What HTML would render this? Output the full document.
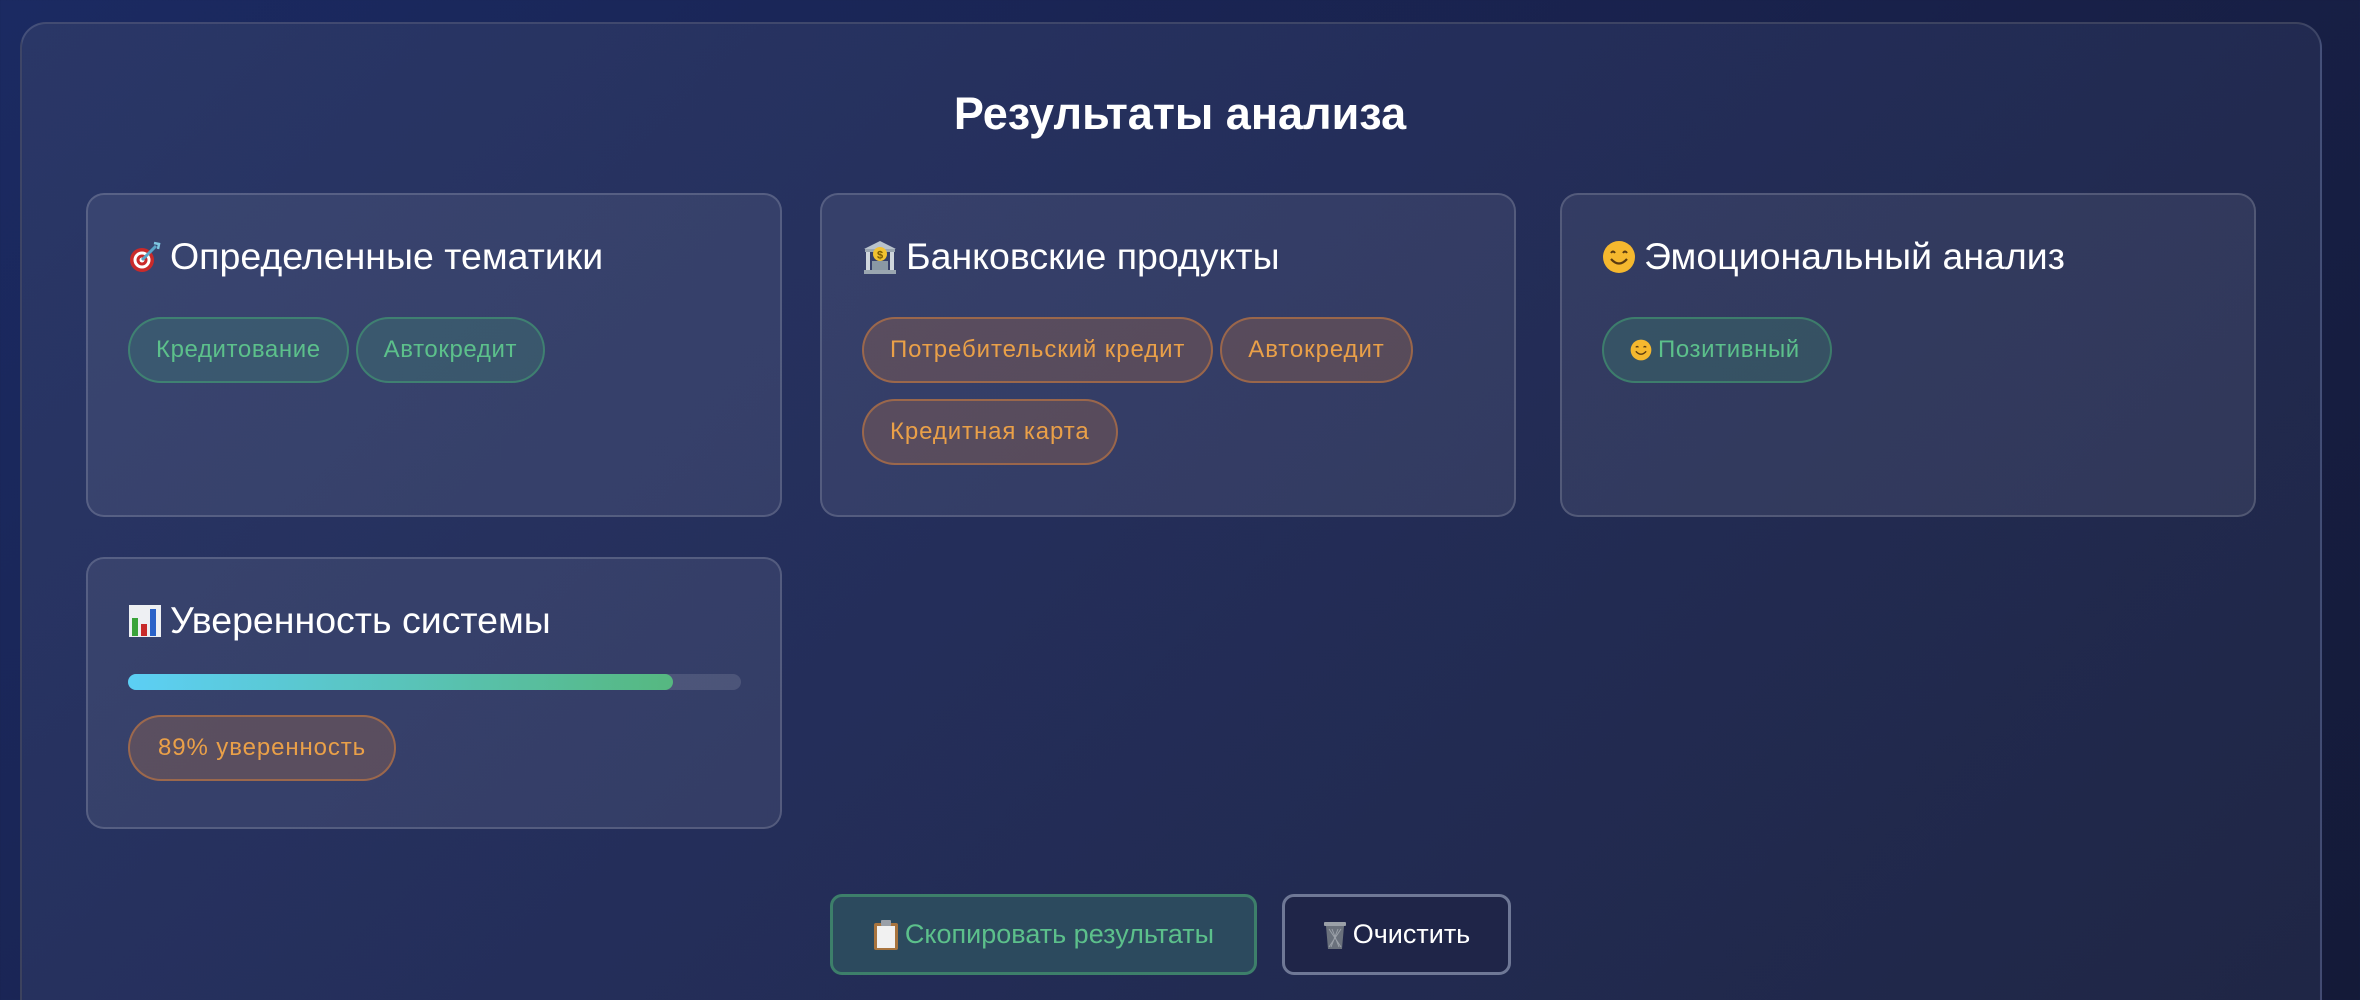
<!DOCTYPE html>
<html><head><meta charset="utf-8"><style>
*{box-sizing:border-box;margin:0;padding:0}
html,body{width:2360px;height:1000px;overflow:hidden}
body{background:linear-gradient(135deg,#1b2a62 0%,#19224d 50%,#141a38 100%);font-family:"Liberation Sans","DejaVu Sans",sans-serif;position:relative}
.wrap{position:absolute;left:20px;top:22px;width:2302px;height:1010px;border-radius:26px;border:2px solid rgba(255,255,255,0.13);background:linear-gradient(135deg,#2a3767 0%,#242e5a 45%,#1f2645 100%)}
h1{position:absolute;left:0;right:0;top:88px;text-align:center;color:#fff;font-size:45px;font-weight:bold}
.card{position:absolute;width:696px;border-radius:18px;border:2px solid rgba(255,255,255,0.16);background:rgba(255,255,255,0.075)}
.card h3{position:absolute;left:40px;top:40px;color:#fff;font-size:37.5px;font-weight:normal;white-space:nowrap;display:flex;align-items:center}
.card h3 svg{margin-right:8px}
.tags{position:absolute;left:40px;top:122px;width:640px}
.tag{display:inline-flex;align-items:center;height:66px;padding:0 26px;border-radius:33px;font-size:24px;margin:0 7px 16px 0;letter-spacing:0.6px;vertical-align:top}
.g{color:#5cc08b;background:rgba(72,187,120,0.18);border:2px solid rgba(72,187,120,0.42)}
.o{color:#eaa048;background:rgba(237,137,54,0.2);border:2px solid rgba(237,137,54,0.45)}
.o.w{letter-spacing:0.9px}
.bar{position:absolute;left:40px;top:115px;width:613px;height:16px;border-radius:8px;background:rgba(255,255,255,0.12)}
.bar div{width:545px;height:16px;border-radius:8px;background:linear-gradient(90deg,#5ccff5,#56b880)}
.btn{position:absolute;top:894px;height:81px;border-radius:12px;display:flex;align-items:center;justify-content:center;font-size:27px}
</style></head><body>
<div class="wrap"></div>
<h1>Результаты анализа</h1>

<div class="card" style="left:86px;top:193px;height:324px">
<h3><svg width="34" height="34" viewBox="0 0 34 34"><circle cx="14" cy="20" r="12" fill="#c92a2a"/><circle cx="14" cy="20" r="8.5" fill="#fff"/><circle cx="14" cy="20" r="5.5" fill="#c92a2a"/><circle cx="14" cy="20" r="2.5" fill="#fff"/><path d="M14 20 L28 6" stroke="#5aa5c8" stroke-width="3"/><path d="M26 3 L31 4 L30 9" stroke="#7ec6e0" stroke-width="2.5" fill="none"/></svg>Определенные тематики</h3>
<div class="tags"><span class="tag g">Кредитование</span><span class="tag g">Автокредит</span></div>
</div>

<div class="card" style="left:820px;top:193px;height:324px">
<h3><svg width="36" height="36" viewBox="0 0 36 36"><path d="M2 10 L18 2 L34 10 Z" fill="#b9c3cc"/><rect x="3" y="10" width="30" height="3" fill="#9aa6b0"/><rect x="4" y="13" width="4" height="18" fill="#cfd6dc"/><rect x="28" y="13" width="4" height="18" fill="#cfd6dc"/><rect x="10" y="22" width="16" height="10" fill="#8a98a4"/><rect x="2" y="31" width="32" height="4" fill="#9aa6b0"/><circle cx="18" cy="15" r="7" fill="#f2c230"/><text x="18" y="19.5" font-size="11" text-anchor="middle" fill="#7a5a00" font-family="Liberation Sans" font-weight="bold">$</text></svg>Банковские продукты</h3>
<div class="tags"><span class="tag o w">Потребительский кредит</span><span class="tag o w">Автокредит</span><br><span class="tag o w">Кредитная карта</span></div>
</div>

<div class="card" style="left:1560px;top:193px;height:324px">
<h3><svg width="34" height="34" viewBox="0 0 34 34"><circle cx="17" cy="17" r="16" fill="#f5b82e"/><path d="M9 13 Q11 10 13 13 M21 13 Q23 10 25 13" stroke="#5a3a10" stroke-width="2" fill="none"/><path d="M9 19 Q17 28 25 19" stroke="#5a3a10" stroke-width="2.2" fill="none"/></svg>Эмоциональный анализ</h3>
<div class="tags"><span class="tag g" style="padding-right:30px"><svg width="22" height="22" viewBox="0 0 34 34" style="margin-right:6px"><circle cx="17" cy="17" r="16" fill="#f5b82e"/><path d="M9 13 Q11 10 13 13 M21 13 Q23 10 25 13" stroke="#5a3a10" stroke-width="2" fill="none"/><path d="M9 19 Q17 28 25 19" stroke="#5a3a10" stroke-width="2.2" fill="none"/></svg>Позитивный</span></div>
</div>

<div class="card" style="left:86px;top:557px;height:272px">
<h3><svg width="34" height="34" viewBox="0 0 34 34"><rect x="1" y="1" width="32" height="32" fill="#eef0f3"/><rect x="4" y="14" width="6" height="18" fill="#3aa33a"/><rect x="13" y="20" width="6" height="12" fill="#c82a2a"/><rect x="22" y="5" width="6" height="27" fill="#2a62c8"/></svg>Уверенность системы</h3>
<div class="bar"><div></div></div>
<div class="tags" style="top:156px"><span class="tag o w" style="padding:0 28px">89% уверенность</span></div>
</div>

<div class="btn" style="left:830px;width:427px;border:3px solid #3d7f6a;background:#2c4a5e;color:#5cc08b"><svg width="26" height="32" viewBox="0 0 26 32" style="margin-right:6px"><rect x="1" y="4" width="24" height="27" rx="2" fill="#a8743e"/><rect x="4" y="7" width="18" height="22" fill="#f1f1f1"/><rect x="8" y="1" width="10" height="6" rx="1" fill="#9aa0a8"/></svg>Скопировать результаты</div>
<div class="btn" style="left:1282px;width:229px;border:3px solid #6f7896;background:#1f2548;color:#fff"><svg width="24" height="30" viewBox="0 0 24 30" style="margin-right:6px"><rect x="1" y="2" width="22" height="4" rx="1" fill="#9aa0a8"/><path d="M3 6 L21 6 L19 29 L5 29 Z" fill="#6a717c"/><path d="M6 9 L18 27 M18 9 L6 27 M9 9 L16 27 M15 9 L8 27" stroke="#9aa0a8" stroke-width="1"/></svg>Очистить</div>
</body></html>
